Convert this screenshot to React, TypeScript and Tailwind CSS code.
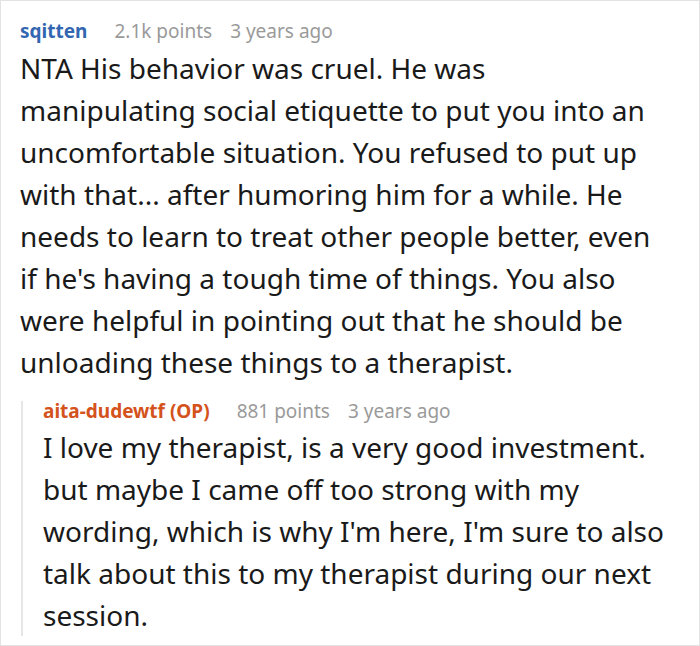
import React from 'react';

type MetaProps = { name: string; nameClass: string; points: string; age: string; lead: string };

const Meta = ({ name, nameClass, points, age, lead }: MetaProps) => (
  <div className={`flex items-baseline text-[19px] ${lead}`}>
    <span className={`font-bold ${nameClass}`}>{name}</span>
    <span className="ml-[27px] text-[#9a9a9a]">{points}</span>
    <span className="ml-[18px] text-[#9a9a9a]">{age}</span>
  </div>
);

export default function App() {
  return (
    <div
      className="w-[700px] h-[646px] border border-[#e3e3e3] bg-white overflow-hidden text-[#1a1a1a]"
      style={{ fontFamily: '"Noto Sans", "Open Sans", sans-serif' }}
    >
      <div className="pl-[19px] pr-[31px] pt-[17px]">
        <Meta name="sqitten" nameClass="text-[#3366b1]" points="2.1k points" age="3 years ago" lead="leading-[26px]" />
        <p className="text-[28px] leading-[42px] mt-[3px]">
          NTA His behavior was cruel. He was manipulating social etiquette to put you into an uncomfortable situation. You
          refused to put up with that... after humoring him for a while. He needs to learn to treat other people better, even
          if he's having a tough time of things. You also were helpful in pointing out that he should be unloading these
          things to a therapist.
        </p>
      </div>
      <div className="ml-[20px] mt-[18px] border-l-2 border-[#e6e6e6] pl-[20px] pr-[31px]">
        <Meta name="aita-dudewtf (OP)" nameClass="text-[#d4521b]" points="881 points" age="3 years ago" lead="leading-[20px]" />
        <p className="text-[28px] leading-[42px] mt-[5px]">
          I love my therapist, is a very good investment. but maybe I came off too strong with my wording, which is why I'm
          here, I'm sure to also talk about this to my therapist during our next session.
        </p>
      </div>
    </div>
  );
}
